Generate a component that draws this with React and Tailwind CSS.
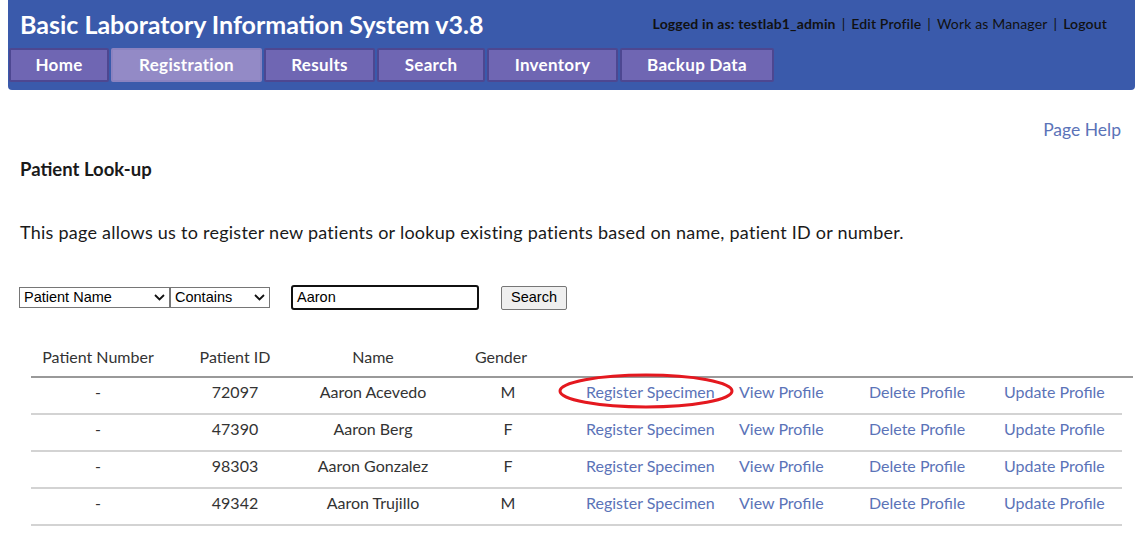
import React from "react";

const tabs = ["Home", "Registration", "Results", "Search", "Inventory", "Backup Data"];
const tabWidths = ["w-[100px]", "w-[151px]", "w-[111px]", "w-[108px]", "w-[131px]", "w-[154px]"];

const patients = [
  { number: "-", id: "72097", name: "Aaron Acevedo", gender: "M" },
  { number: "-", id: "47390", name: "Aaron Berg", gender: "F" },
  { number: "-", id: "98303", name: "Aaron Gonzalez", gender: "F" },
  { number: "-", id: "49342", name: "Aaron Trujillo", gender: "M" },
];

const Chevron = () => (
  <svg width="11" height="7" viewBox="0 0 11 7" className="shrink-0">
    <path d="M1 1l4.5 4.5L10 1" fill="none" stroke="#111" strokeWidth="1.8" />
  </svg>
);

const Select = ({ value, width }) => (
  <div className={`flex items-center justify-between h-[21px] border border-[#767676] bg-white pl-[4px] pr-[4px] text-[14.5px] text-black font-['Liberation_Sans',sans-serif] ${width}`}>
    <span>{value}</span>
    <Chevron />
  </div>
);

const App = () => {
  return (
    <div className="w-[1143px] h-[535px] bg-white font-['Lato',sans-serif] text-[#1a1a1a] overflow-hidden">
      <div className="mx-[8px] h-[90px] bg-[#3a5aab] rounded-b-[4px] flex flex-col">
        <div className="flex items-start justify-between h-[48px] pl-[12px] pr-[28px]">
          <div className="text-[25px] font-bold text-white pt-[8px] leading-[32px]">
            Basic Laboratory Information System v3.8
          </div>
          <div className="text-[14px] text-[#111] pt-[13px] tracking-[0.15px]">
            <span className="font-bold">Logged in as: testlab1_admin</span>
            <span className="mx-[6px]">|</span>
            <span className="font-semibold">Edit Profile</span>
            <span className="mx-[6px]">|</span>
            <span>Work as Manager</span>
            <span className="mx-[6px]">|</span>
            <span className="font-semibold">Logout</span>
          </div>
        </div>
        <div className="flex gap-[2px] pl-[1px]">
          {tabs.map((t, i) => (
            <div
              key={t}
              className={`h-[34px] flex items-center justify-center rounded-[2px] border-2 text-white font-bold text-[17px] tracking-[0.3px] ${tabWidths[i]} ${
                t === "Registration" ? "bg-[#938ac6] border-[#8a82c0]" : "bg-[#6f66b3] border-[#4d4791]"
              }`}
            >
              {t}
            </div>
          ))}
        </div>
      </div>

      <div className="flex justify-end pr-[22px] pt-[28px]">
        <a className="text-[#5b73b8] text-[17.5px] leading-[24px]">Page Help</a>
      </div>

      <div className="pl-[20px] pt-[15px] text-[18.5px] font-bold leading-[24px]">Patient Look-up</div>

      <div className="pl-[20px] pt-[39px] text-[18px] tracking-[0.25px] leading-[24px]">
        This page allows us to register new patients or lookup existing patients based on name, patient ID or number.
      </div>

      <div className="flex items-center pl-[19px] pt-[41px]">
        <Select value="Patient Name" width="w-[151px]" />
        <Select value="Contains" width="w-[100px]" />
        <div className="ml-[21px] w-[188px] h-[25px] border-2 border-[#111] rounded-[3px] px-[4px] flex items-center text-[14.5px] text-black font-['Liberation_Sans',sans-serif]">
          Aaron
        </div>
        <div className="ml-[22px] w-[66px] h-[24px] border border-[#767676] rounded-[2px] bg-[#efefef] flex items-center justify-center text-[14.5px] text-black font-['Liberation_Sans',sans-serif]">
          Search
        </div>
      </div>

      <div className="pl-[31px] pt-[28px] text-[16px] text-[#333]">
        <div className="grid grid-cols-[134px_140px_136px_124px_165px_130px_135px_136px] h-[40px] items-center border-b-2 border-[#999] w-[1102px]">
          <div className="text-center">Patient Number</div>
          <div className="text-center">Patient ID</div>
          <div className="text-center">Name</div>
          <div className="text-center pr-[4px]">Gender</div>
          <div></div>
          <div></div>
          <div></div>
          <div></div>
        </div>
        {patients.map((p, i) => (
          <div
            key={p.id}
            className="grid grid-cols-[134px_140px_136px_124px_165px_130px_135px_136px] h-[37px] items-center pb-[8px] border-b-2 border-[#d3d3d3] w-[1091px]"
          >
            <div className="text-center">{p.number}</div>
            <div className="text-center">{p.id}</div>
            <div className="text-center">{p.name}</div>
            <div className="text-center pl-[10px]">{p.gender}</div>
            <div className="relative pl-[21px] text-[#5b73b8]">
              Register Specimen
              {i === 0 && (
                <svg className="absolute left-[-8px] top-[-8px]" width="178" height="38" viewBox="0 0 178 38">
                  <ellipse cx="89" cy="19" rx="86" ry="16" fill="none" stroke="#e4181f" strokeWidth="3" />
                </svg>
              )}
            </div>
            <div className="pl-[9px] text-[#5b73b8]">View Profile</div>
            <div className="pl-[9px] text-[#5b73b8]">Delete Profile</div>
            <div className="pl-[9px] text-[#5b73b8]">Update Profile</div>
          </div>
        ))}
      </div>
    </div>
  );
};

export default App;
